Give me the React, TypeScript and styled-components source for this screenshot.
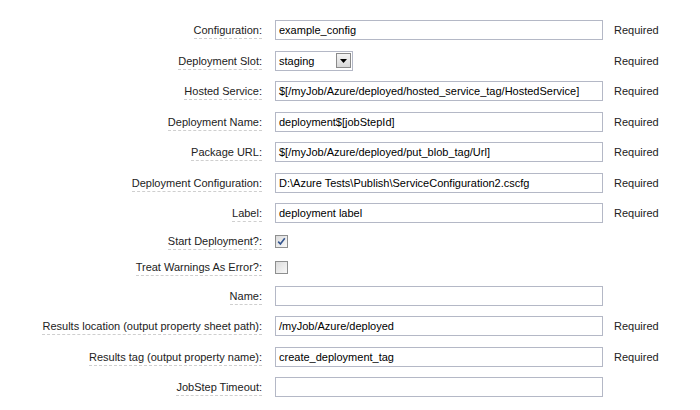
import React from "react";
import styled, { createGlobalStyle } from "styled-components";

const Global = createGlobalStyle`
  html, body { margin: 0; padding: 0; background: #fff; }
  body { font-family: "Liberation Sans", Arial, sans-serif; font-size: 11px; color: #222; }
`;

const Form = styled.div`
  display: grid;
  grid-template-columns: 262px 341px auto;
  padding-top: 14.75px;
  width: 700px;
`;

const Row = styled.div<{ $h: number }>`
  display: contents;
  & > * { height: ${(p) => p.$h}px; }
`;

const LabelCell = styled.div`
  display: flex;
  align-items: center;
  justify-content: flex-end;
`;

const LabelText = styled.span`
  display: inline-block;
  line-height: 13px;
  border-bottom: 1px dashed #cfcfcf;
  padding-bottom: 1px;
  margin-top: 3px;
  color: #222;
  white-space: nowrap;
`;

const FieldCell = styled.div`
  display: flex;
  align-items: center;
  padding-left: 13px;
`;

const TextBox = styled.div`
  box-sizing: border-box;
  flex: 0 0 328px;
  width: 328px;
  height: 20px;
  border: 1px solid #b4b8c6;
  background: #fff;
  padding: 0 3px;
  display: flex;
  align-items: center;
  color: #000;
  white-space: nowrap;
  overflow: hidden;
`;

const Select = styled.div`
  box-sizing: border-box;
  flex: 0 0 78px;
  width: 78px;
  height: 20px;
  border: 1px solid #b4b8c6;
  background: #fff;
  display: flex;
  align-items: center;
  justify-content: space-between;
  padding: 0 1px 0 3px;
  color: #000;
`;

const ArrowBtn = styled.div`
  box-sizing: border-box;
  width: 15px;
  height: 15px;
  border: 1px solid #8a8a8a;
  background: linear-gradient(#f4f4f4, #d8d8d8);
  display: flex;
  align-items: center;
  justify-content: center;
`;

const Check = styled.div`
  box-sizing: border-box;
  flex: 0 0 13px;
  width: 13px;
  height: 13px;
  border: 1px solid #8e8f8f;
  background: linear-gradient(135deg, #dcdcdc, #f8f8f8);
  display: flex;
  align-items: center;
  justify-content: center;
`;

const ReqCell = styled.div`
  display: flex;
  align-items: center;
  padding-left: 11px;
  color: #222;
`;

type Field = {
  label: string;
  kind: "text" | "select" | "check";
  value?: string;
  checked?: boolean;
  required?: boolean;
};

const fields: Field[] = [
  { label: "Configuration:", kind: "text", value: "example_config", required: true },
  { label: "Deployment Slot:", kind: "select", value: "staging", required: true },
  { label: "Hosted Service:", kind: "text", value: "$[/myJob/Azure/deployed/hosted_service_tag/HostedService]", required: true },
  { label: "Deployment Name:", kind: "text", value: "deployment$[jobStepId]", required: true },
  { label: "Package URL:", kind: "text", value: "$[/myJob/Azure/deployed/put_blob_tag/Url]", required: true },
  { label: "Deployment Configuration:", kind: "text", value: "D:\\Azure Tests\\Publish\\ServiceConfiguration2.cscfg", required: true },
  { label: "Label:", kind: "text", value: "deployment label", required: true },
  { label: "Start Deployment?:", kind: "check", checked: true },
  { label: "Treat Warnings As Error?:", kind: "check", checked: false },
  { label: "Name:", kind: "text", value: "" },
  { label: "Results location (output property sheet path):", kind: "text", value: "/myJob/Azure/deployed", required: true },
  { label: "Results tag (output property name):", kind: "text", value: "create_deployment_tag", required: true },
  { label: "JobStep Timeout:", kind: "text", value: "" },
];

function Control({ f }: { f: Field }) {
  if (f.kind === "select") {
    return (
      <Select>
        <span>{f.value}</span>
        <ArrowBtn>
          <svg width="7" height="4" viewBox="0 0 7 4">
            <path d="M0 0h7L3.5 4z" fill="#000" />
          </svg>
        </ArrowBtn>
      </Select>
    );
  }
  if (f.kind === "check") {
    return (
      <Check>
        {f.checked && (
          <svg width="9" height="9" viewBox="0 0 9 9">
            <path d="M1.2 4.6 L3.4 7 L7.8 1.2" stroke="#34558f" strokeWidth="1.6" fill="none" />
          </svg>
        )}
      </Check>
    );
  }
  return <TextBox>{f.value}</TextBox>;
}

export default function App() {
  return (
    <>
      <Global />
      <Form>
        {fields.map((f, i) => (
          <Row key={i} $h={f.kind === "check" ? 26 : 30.5}>
            <LabelCell>
              <LabelText>{f.label}</LabelText>
            </LabelCell>
            <FieldCell>
              <Control f={f} />
            </FieldCell>
            <ReqCell>{f.required ? "Required" : ""}</ReqCell>
          </Row>
        ))}
      </Form>
    </>
  );
}
